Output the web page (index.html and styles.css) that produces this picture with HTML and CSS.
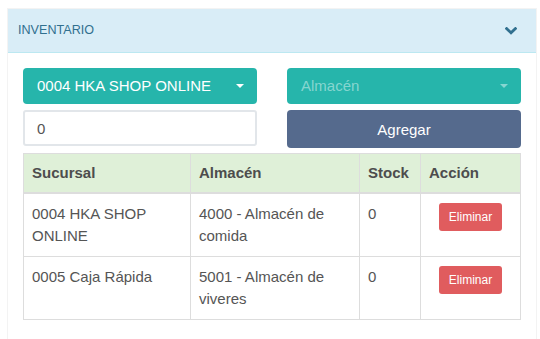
FILE: index.html
```html
<!DOCTYPE html>
<html lang="es">
<head>
    <meta charset="UTF-8">
    <meta name="viewport" content="width=device-width, initial-scale=1.0">
    <title>Inventario</title>
    <link rel="stylesheet" href="styles.css">
</head>
<body>
    <div class="page">
        <div class="panel">
            <div class="panel-heading">
                <span class="panel-title">INVENTARIO</span>
                <svg class="chevron" width="12" height="8" viewBox="0 0 12 8">
                    <polyline points="1.6,1.6 6,5.8 10.4,1.6" fill="none" stroke="#31708f" stroke-width="2.8" stroke-linecap="square"/>
                </svg>
            </div>

            <div class="panel-body">
                <div class="form-grid">
                    <div class="select-box">
                        <span>0004 HKA SHOP ONLINE</span>
                        <span class="caret"></span>
                    </div>
                    <div class="select-box placeholder">
                        <span>Almacén</span>
                        <span class="caret"></span>
                    </div>
                    <input type="text" class="qty-input" value="0">
                    <button class="btn-add">Agregar</button>
                </div>

                <table class="stock-table">
                    <thead>
                        <tr>
                            <th class="col-branch">Sucursal</th>
                            <th class="col-store">Almacén</th>
                            <th class="col-stock">Stock</th>
                            <th class="col-action">Acción</th>
                        </tr>
                    </thead>
                    <tbody>
                        <tr>
                            <td>0004 HKA SHOP ONLINE</td>
                            <td>4000 - Almacén de comida</td>
                            <td>0</td>
                            <td class="action-cell"><button class="btn-delete">Eliminar</button></td>
                        </tr>
                        <tr>
                            <td>0005 Caja Rápida</td>
                            <td>5001 - Almacén de viveres</td>
                            <td>0</td>
                            <td class="action-cell"><button class="btn-delete">Eliminar</button></td>
                        </tr>
                    </tbody>
                </table>
            </div>
        </div>
    </div>
</body>
</html>
```

FILE: styles.css
```css
:root {
    --teal: #26b5ab;
    --navy: #556a8d;
    --red: #e05c5e;
    --info-bg: #d9edf7;
    --info-border: #bce8f1;
    --info-text: #31708f;
    --success-bg: #dff0d8;
    --border: #ddd;
    --text: #555;
}

* {
    margin: 0;
    padding: 0;
    box-sizing: border-box;
}

body {
    font-family: "Liberation Sans", Arial, sans-serif;
    font-size: 15px;
    line-height: 1.5;
    color: var(--text);
    background: #fff;
}

.page {
    padding: 8px 3px 0 7px;
}

.panel {
    border: 1px solid #f3f3f3;
    border-bottom: none;
    background: #fff;
}

.panel-heading {
    display: flex;
    align-items: center;
    justify-content: space-between;
    height: 44px;
    padding: 0 19px 0 10px;
    background: var(--info-bg);
    border-bottom: 1px solid var(--info-border);
}

.panel-title {
    font-size: 12.6px;
    color: var(--info-text);
}

.chevron {
    display: block;
}

.panel-body {
    padding: 15px 15px 30px;
}

.form-grid {
    display: grid;
    grid-template-columns: 1fr 1fr;
    column-gap: 30px;
    row-gap: 6px;
    margin-bottom: 5px;
}

.select-box {
    display: flex;
    align-items: center;
    justify-content: space-between;
    height: 36px;
    padding: 0 13px 0 14px;
    background: var(--teal);
    color: #fff;
    border-radius: 4px;
}

.select-box.placeholder {
    color: rgba(255, 255, 255, 0.45);
}

.caret {
    width: 0;
    height: 0;
    border-left: 4px solid transparent;
    border-right: 4px solid transparent;
    border-top: 4px solid #fff;
}

.placeholder .caret {
    border-top-color: rgba(255, 255, 255, 0.45);
}

.qty-input {
    height: 36px;
    padding: 0 12px;
    border: 2px solid #e2e6ea;
    border-radius: 3px;
    font-family: inherit;
    font-size: 15px;
    color: var(--text);
    outline: none;
}

.btn-add {
    height: 38px;
    background: var(--navy);
    color: #fff;
    border: none;
    border-radius: 4px;
    font-family: inherit;
    font-size: 15px;
}

.stock-table {
    width: 100%;
    border-collapse: collapse;
    border: 1px solid var(--border);
}

.stock-table th,
.stock-table td {
    border: 1px solid var(--border);
    text-align: left;
    vertical-align: top;
}

.stock-table th {
    padding: 8px 8px 7px;
    background: var(--success-bg);
    font-weight: bold;
    color: #4d4d4d;
    border-bottom-width: 2px;
}

.stock-table td {
    padding: 9px 8px 8px;
}

.col-branch { width: 167px; }
.col-store { width: 169px; }
.col-stock { width: 61px; }

.stock-table td.action-cell {
    text-align: center;
}

.btn-delete {
    padding: 5px 10px;
    background: var(--red);
    color: #fff;
    border: none;
    border-radius: 3px;
    font-family: inherit;
    font-size: 12px;
    line-height: 1.5;
}
```
